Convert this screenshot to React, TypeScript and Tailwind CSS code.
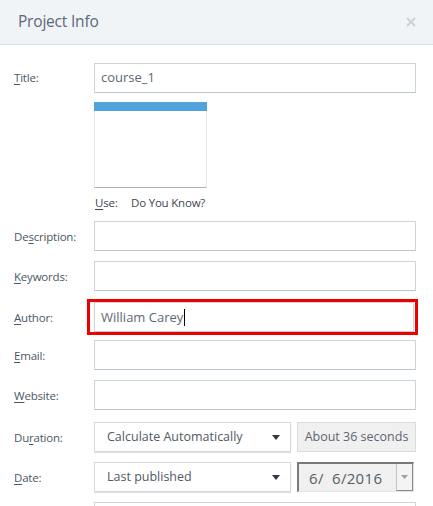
import React from 'react';

const font = { fontFamily: '"Open Sans", "Noto Sans", Arial, sans-serif' };

function Key({ text, index }: { text: string; index: number }) {
  return (
    <>
      {text.slice(0, index)}
      <span className="underline underline-offset-2">{text[index]}</span>
      {text.slice(index + 1)}
    </>
  );
}

function Label({ text, index }: { text: string; index: number }) {
  return (
    <div className="w-[80px] shrink-0 text-[11.5px] text-[#4b5763] tracking-[-0.2px]">
      <Key text={text} index={index} />
    </div>
  );
}

function TextBox({ value, caret }: { value?: string; caret?: boolean }) {
  return (
    <div className="flex-1 h-[30px] border border-[#cdd5db] border-b-[#bcc6cd] bg-white flex items-center px-[6px] text-[13px] text-[#5d6873]">
      {value}
      {caret && <span className="w-px h-[17px] bg-black ml-px" />}
    </div>
  );
}

function Select({ value }: { value: string }) {
  return (
    <div className="w-[197px] h-[30px] border border-[#d3d9de] bg-white flex items-center justify-between pl-[12px] pr-[10px] text-[12.5px] text-[#4f5a65] shadow-[0_1px_1px_rgba(0,0,0,0.12)]">
      <span>{value}</span>
      <svg width="8" height="5" viewBox="0 0 8 5">
        <path d="M0 0 L8 0 L4 5 Z" fill="#2f3a45" />
      </svg>
    </div>
  );
}

export default function App() {
  return (
    <div className="w-[433px] h-[506px] overflow-hidden bg-white" style={font}>
      <div className="h-[45px] bg-[#f1f4f7] border-b border-[#dde3e8] flex items-center justify-between pl-[18px] pr-[17px]">
        <span className="text-[15.5px] text-[#5a6977] tracking-[-0.2px]">Project Info</span>
        <svg width="10" height="10" viewBox="0 0 10 10">
          <path d="M1 1 L9 9 M9 1 L1 9" stroke="#cfd2d5" strokeWidth="2" />
        </svg>
      </div>

      <div className="pl-[14px] pr-[17px] pt-[18px] flex flex-col">
        <div className="flex items-center">
          <Label text="Title:" index={0} />
          <TextBox value="course_1" />
        </div>

        <div className="flex mt-[9px]">
          <div className="w-[80px] shrink-0" />
          <div className="flex flex-col">
            <div className="w-[113px] h-[86px] border-x border-[#e8e8e8] border-b border-b-[#a9b5bd] bg-white flex flex-col">
              <div className="h-[9px] bg-[#52a3db] -mx-px" />
            </div>
            <div className="flex mt-[6px] text-[11.5px] text-[#3c4650] tracking-[-0.2px]">
              <span className="w-[37px] pl-px">
                <Key text="Use:" index={0} />
              </span>
              <span>Do You Know?</span>
            </div>
          </div>
        </div>

        <div className="flex items-center mt-[10px]">
          <Label text="Description:" index={2} />
          <TextBox />
        </div>

        <div className="flex items-center mt-[10px]">
          <Label text="Keywords:" index={0} />
          <TextBox />
        </div>

        <div className="flex items-center mt-[8px]">
          <Label text="Author:" index={0} />
          <div className="flex-1 border-[3px] border-[#ee0000] -ml-[7px] -mr-[2px] pl-[4px] pr-[1px] py-0 flex">
            <TextBox value="William Carey" caret />
          </div>
        </div>

        <div className="flex items-center mt-[5px]">
          <Label text="Email:" index={0} />
          <TextBox />
        </div>

        <div className="flex items-center mt-[10px]">
          <Label text="Website:" index={0} />
          <TextBox />
        </div>

        <div className="flex items-center mt-[12px]">
          <Label text="Duration:" index={2} />
          <Select value="Calculate Automatically" />
          <div className="flex-1 ml-[6px] h-[30px] bg-[#f0f0f0] border border-[#dcdcdc] flex items-center justify-center text-[12.5px] text-[#5d6670]">
            About 36 seconds
          </div>
        </div>

        <div className="flex items-center mt-[10px]">
          <Label text="Date:" index={0} />
          <Select value="Last published" />
          <div className="flex-1 ml-[6px] mr-[2px] h-[30px] bg-[#f0f0f0] border-t-2 border-l-2 border-[#7a7a7a] border-r border-b border-r-[#e3e3e3] border-b-[#e3e3e3] flex items-center justify-between pl-[10px]">
            <span className="text-[15px] text-[#555e66] tracking-[0.3px]" style={{ whiteSpace: 'pre' }}>6/  6/2016</span>
            <div className="w-[17px] h-full bg-[#f4f4f4] border-l border-[#c4c4c4] border-r border-r-[#8a8a8a] border-b border-b-[#8a8a8a] flex items-center justify-center">
              <svg width="7" height="4" viewBox="0 0 7 4">
                <path d="M0 0 L7 0 L3.5 4 Z" fill="#a0a0a0" />
              </svg>
            </div>
          </div>
        </div>

        <div className="flex items-center mt-[10px]">
          <div className="w-[80px] shrink-0" />
          <TextBox />
        </div>
      </div>
    </div>
  );
}
